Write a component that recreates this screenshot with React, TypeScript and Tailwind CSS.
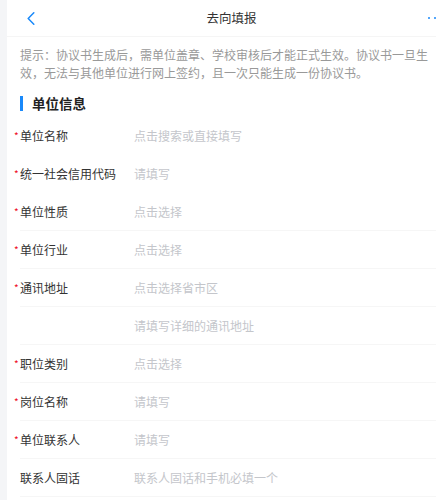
import React from "react";

const rows: { label: string; placeholder: string; required: boolean }[] = [
  { label: "单位名称", placeholder: "点击搜索或直接填写", required: true },
  { label: "统一社会信用代码", placeholder: "请填写", required: true },
  { label: "单位性质", placeholder: "点击选择", required: true },
  { label: "单位行业", placeholder: "点击选择", required: true },
  { label: "通讯地址", placeholder: "点击选择省市区", required: true },
  { label: "", placeholder: "请填写详细的通讯地址", required: false },
  { label: "职位类别", placeholder: "点击选择", required: true },
  { label: "岗位名称", placeholder: "请填写", required: true },
  { label: "单位联系人", placeholder: "请填写", required: true },
  { label: "联系人固话", placeholder: "联系人固话和手机必填一个", required: false },
];

export default function App() {
  return (
    <div
      className="w-[436px] h-[500px] overflow-hidden bg-white"
      style={{ fontFamily: '"Noto Sans CJK SC", "Noto Sans", sans-serif' }}
    >
      <div className="flex w-[457px] h-full">
        <div className="w-[7px] shrink-0 bg-[#f4f5f7]" />
        <div className="w-[450px] shrink-0 flex flex-col">
          {/* header */}
          <div className="h-[37px] shrink-0 flex items-center justify-between border-b border-[#f5f5f5] pl-[20px] pr-[15px]">
            <svg width="8" height="13" viewBox="0 0 8 13">
              <path d="M6.8 0.8 L1.2 6.5 L6.8 12.2" fill="none" stroke="#1989fa" strokeWidth="1.5" strokeLinecap="round" strokeLinejoin="round" />
            </svg>
            <div className="text-[12.5px] text-[#333]">去向填报</div>
            <div className="flex gap-[4px] items-center">
              <span className="w-[2px] h-[2px] rounded-full bg-[#1989fa]" />
              <span className="w-[2px] h-[2px] rounded-full bg-[#1989fa]" />
              <span className="w-[2px] h-[2px] rounded-full bg-[#1989fa]" />
            </div>
          </div>
          {/* hint */}
          <div className="pl-[13px] pr-[25px] pt-[9px] text-[12px] leading-[18px] text-[#999]">
            提示：协议书生成后，需单位盖章、学校审核后才能正式生效。协议书一旦生效，无法与其他单位进行网上签约，且一次只能生成一份协议书。
          </div>
          {/* section title */}
          <div className="flex items-center pl-[13px] mt-[13px] h-[17px]">
            <div className="w-[3px] h-[15px] bg-[#1989fa]" />
            <div className="ml-[9px] text-[13.5px] font-bold text-[#222] leading-[17px]">单位信息</div>
          </div>
          {/* rows */}
          <div className="mt-[5px] flex flex-col">
            {rows.map((r, i) => (
              <div
                key={i}
                className={
                  i < 2
                    ? "ml-[13px] h-[38px] shrink-0 border-b border-transparent flex items-center"
                    : "ml-[13px] h-[38px] shrink-0 border-b border-[#f6f6f6] flex items-center"
                }
              >
                <div className="w-[114px] shrink-0 flex items-start text-[12px] leading-[18px] text-[#333]">
                  {r.required ? (
                    <span className="-ml-[6px] w-[6px] text-[#ee0a24] text-[10px] leading-none mt-[4px]">*</span>
                  ) : null}
                  <span>{r.label}</span>
                </div>
                <div className="text-[12px] leading-[18px] text-[#c4c6cb]">{r.placeholder}</div>
              </div>
            ))}
          </div>
        </div>
      </div>
    </div>
  );
}
